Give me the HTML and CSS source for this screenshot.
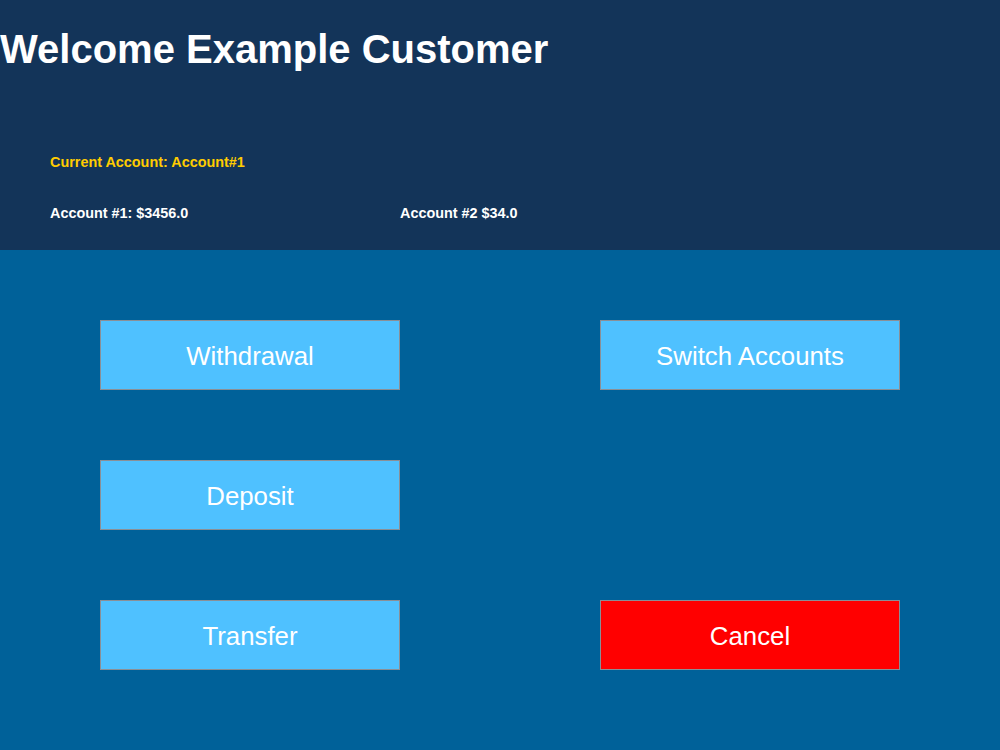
FILE: index.html
```html
<!DOCTYPE html>
<html>
<head>
<meta charset="utf-8">
<link rel="stylesheet" href="styles.css">
</head>
<body>
<header class="header">
  <h1 class="title">Welcome Example Customer</h1>
  <div class="accounts">
    <p class="current">Current Account: Account#1</p>
    <div class="balances">
      <span class="balance">Account #1: $3456.0</span>
      <span class="balance">Account #2 $34.0</span>
    </div>
  </div>
</header>
<main class="actions">
  <button class="btn">Withdrawal</button>
  <button class="btn">Switch Accounts</button>
  <button class="btn">Deposit</button>
  <span class="empty"></span>
  <button class="btn">Transfer</button>
  <button class="btn btn-cancel">Cancel</button>
</main>
</body>
</html>
```
FILE: styles.css
```css
html, body {
  margin: 0;
  padding: 0;
}
body {
  width: 1000px;
  height: 750px;
  background: #006199;
  font-family: "Liberation Sans", Arial, sans-serif;
  overflow: hidden;
}
.header {
  height: 250px;
  background: #133459;
  box-sizing: border-box;
}
.title {
  margin: 0;
  padding-top: 26px;
  font-size: 40px;
  line-height: 46px;
  font-weight: bold;
  color: #ffffff;
}
.accounts {
  padding: 0 0 0 50px;
  margin-top: 82px;
}
.current {
  margin: 0;
  font-size: 14.4px;
  line-height: 16px;
  font-weight: bold;
  color: #ffcc00;
}
.balances {
  display: flex;
  margin-top: 35px;
}
.balance {
  width: 350px;
  font-size: 14.4px;
  line-height: 16px;
  font-weight: bold;
  color: #ffffff;
}
.actions {
  display: grid;
  grid-template-columns: 300px 300px;
  grid-auto-rows: 70px;
  column-gap: 200px;
  row-gap: 70px;
  padding: 70px 0 0 100px;
}
.btn {
  margin: 0;
  border: 1px solid #8a8f96;
  background: #4fc1ff;
  color: #ffffff;
  font-family: "Liberation Sans", Arial, sans-serif;
  font-size: 25.8px;
  padding: 3px 0 0 0;
}
.btn-cancel {
  background: #ff0000;
}
```
